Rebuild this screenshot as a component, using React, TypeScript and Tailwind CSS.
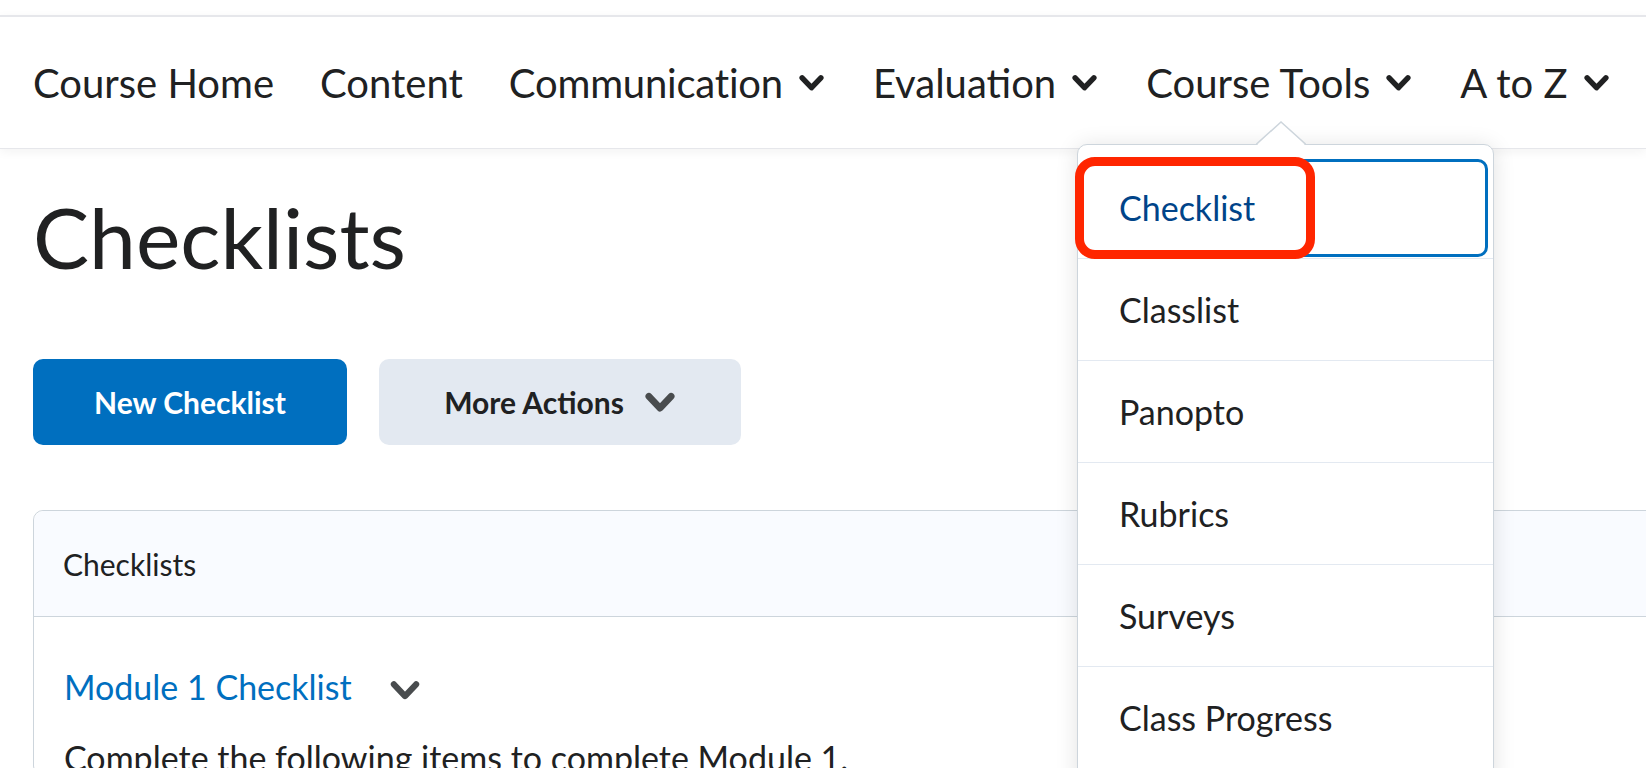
import * as React from "react";

const NAV_ITEMS: { label: string; menu: boolean }[] = [
  { label: "Course Home", menu: false },
  { label: "Content", menu: false },
  { label: "Communication", menu: true },
  { label: "Evaluation", menu: true },
  { label: "Course Tools", menu: true },
  { label: "A to Z", menu: true },
];

const MENU_ITEMS: string[] = ["Checklist", "Classlist", "Panopto", "Rubrics", "Surveys", "Class Progress"];

function Chevron({ className, stroke }: { className: string; stroke: number }): React.ReactElement {
  return (
    <svg className={className} viewBox="0 0 24 17" fill="none" stroke="currentColor">
      <path d="M3 3.5 L12 13 L21 3.5" strokeWidth={stroke} strokeLinecap="round" strokeLinejoin="round" />
    </svg>
  );
}

function NavBar(): React.ReactElement {
  return (
    <nav className="relative z-10 h-[134px] flex items-center gap-[46px] pl-[33px] border-t-2 border-b border-[#e6e7eb] bg-white shadow-[0_3px_10px_rgba(0,0,0,0.05)]">
      {NAV_ITEMS.map(function (item) {
        return (
          <div
            key={item.label}
            className={
              item.menu
                ? "flex items-center gap-[16px] pr-[3px] text-[40px] leading-none text-[#202122]"
                : "flex items-center text-[40px] leading-none text-[#202122]"
            }
          >
            <span className={item.label === "Communication" ? "tracking-[-0.2px]" : ""}>{item.label}</span>
            {item.menu && <Chevron className="w-[25px] h-[18px]" stroke={5.2} />}
          </div>
        );
      })}
    </nav>
  );
}

function ToolsMenu(): React.ReactElement {
  return (
    <>
      <div className="absolute left-[1077px] top-[144px] z-20 w-[417px] bg-white border border-[#cdd5dc] rounded-[10px] shadow-[0_2px_22px_rgba(0,0,0,0.12)] pt-[12px] pb-[20px]">
        {MENU_ITEMS.map(function (label, index) {
          return (
            <div
              key={label}
              className="relative h-[102px] flex items-center pl-[41px] border-b border-[#e3e9f1] text-[34px] leading-none"
            >
              {index === 0 && (
                <div className="absolute left-[3px] right-[5px] top-[2px] bottom-[1px] border-[3px] border-[#006fbf] rounded-[10px]" />
              )}
              <span className={index === 0 ? "text-[#004489]" : "text-[#202122]"}>{label}</span>
            </div>
          );
        })}
      </div>
      <svg className="absolute left-[1256px] top-[121px] z-30 w-[50px] h-[25px]" viewBox="0 0 50 25">
        <polygon points="0,25 25,1 50,25" fill="white" />
        <path d="M0 23.5 L25 1 L50 23.5" fill="none" stroke="#cdd5dc" strokeWidth="1.5" />
      </svg>
      <div className="absolute left-[1075px] top-[157px] z-40 w-[240px] h-[102px] border-[9px] border-[#ff2600] rounded-[20px]" />
    </>
  );
}

export default function App(): React.ReactElement {
  return (
    <div
      className="relative w-[1646px] h-[768px] overflow-hidden bg-white pt-[15px]"
      style={{ fontFamily: "Lato, 'Open Sans', sans-serif" }}
    >
      <NavBar />

      <main className="pl-[33px]">
        <h1 className="mt-[46px] text-[84px] leading-none text-[#202122]">Checklists</h1>

        <div className="mt-[80px] flex gap-[32px]">
          <button className="w-[314px] h-[86px] rounded-[10px] bg-[#006fbf] text-white text-[30px] font-bold">
            New Checklist
          </button>
          <button className="w-[362px] h-[86px] rounded-[10px] bg-[#e3e9f1] text-[#202122] text-[30px] font-bold flex items-center justify-center gap-[20px]">
            <span>More Actions</span>
            <Chevron className="w-[32px] h-[21px] text-[#494c4e]" stroke={5.5} />
          </button>
        </div>

        <div className="mt-[65px] -mr-[20px] border border-[#cdd5dc] rounded-[10px]">
          <div className="h-[106px] flex items-center pl-[29px] bg-[#f9fbff] border-b border-[#cdd5dc] rounded-t-[10px] text-[30px] leading-none text-[#202122]">
            Checklists
          </div>
          <div className="pt-[53px] pl-[30px]">
            <div className="flex items-center gap-[38px]">
              <span className="text-[34px] leading-none text-[#006fbf]">Module 1 Checklist</span>
              <Chevron className="w-[30px] h-[21px] text-[#494c4e] mt-[6px]" stroke={5} />
            </div>
            <p className="mt-[37px] text-[34px] leading-none text-[#202122]">
              Complete the following items to complete Module 1.
            </p>
          </div>
        </div>
      </main>

      <ToolsMenu />
    </div>
  );
}
